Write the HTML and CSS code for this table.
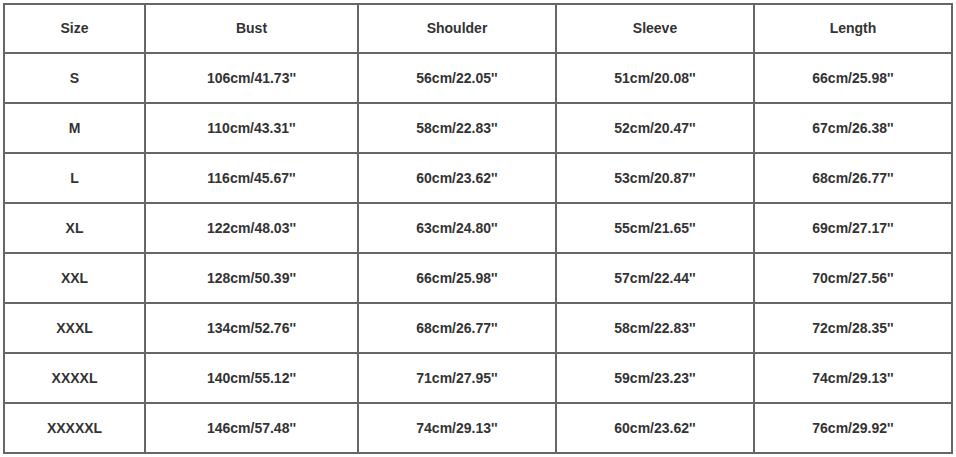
FILE: index.html
```html
<!DOCTYPE html>
<html>
<head>
<meta charset="utf-8">
<link rel="stylesheet" href="styles.css">
</head>
<body>
<table class="size-table">
  <colgroup>
    <col class="c-size"><col class="c-bust"><col class="c-sh"><col class="c-sl"><col class="c-len">
  </colgroup>
  <thead>
    <tr><th>Size</th><th>Bust</th><th>Shoulder</th><th>Sleeve</th><th>Length</th></tr>
  </thead>
  <tbody>
    <tr><td>S</td><td>106cm/41.73''</td><td>56cm/22.05''</td><td>51cm/20.08''</td><td>66cm/25.98''</td></tr>
    <tr><td>M</td><td>110cm/43.31''</td><td>58cm/22.83''</td><td>52cm/20.47''</td><td>67cm/26.38''</td></tr>
    <tr><td>L</td><td>116cm/45.67''</td><td>60cm/23.62''</td><td>53cm/20.87''</td><td>68cm/26.77''</td></tr>
    <tr><td>XL</td><td>122cm/48.03''</td><td>63cm/24.80''</td><td>55cm/21.65''</td><td>69cm/27.17''</td></tr>
    <tr><td>XXL</td><td>128cm/50.39''</td><td>66cm/25.98''</td><td>57cm/22.44''</td><td>70cm/27.56''</td></tr>
    <tr><td>XXXL</td><td>134cm/52.76''</td><td>68cm/26.77''</td><td>58cm/22.83''</td><td>72cm/28.35''</td></tr>
    <tr><td>XXXXL</td><td>140cm/55.12''</td><td>71cm/27.95''</td><td>59cm/23.23''</td><td>74cm/29.13''</td></tr>
    <tr><td>XXXXXL</td><td>146cm/57.48''</td><td>74cm/29.13''</td><td>60cm/23.62''</td><td>76cm/29.92''</td></tr>
  </tbody>
</table>
</body>
</html>
```
FILE: styles.css
```css
html, body {
  margin: 0;
  padding: 0;
  background: #ffffff;
}
body {
  padding: 3px 0 0 3px;
  font-family: "Liberation Sans", Arial, sans-serif;
}
.size-table {
  border-collapse: collapse;
  table-layout: fixed;
  width: 950px;
}
.c-size { width: 141px; }
.c-bust { width: 213px; }
.c-sh { width: 198px; }
.c-sl { width: 198px; }
.c-len { width: 198px; }
.size-table th,
.size-table td {
  border: 2px solid #666666;
  height: 48px;
  padding: 0;
  text-align: center;
  vertical-align: middle;
  font-size: 14px;
  font-weight: bold;
  color: #333333;
}
.size-table th {
  height: 45px;
  padding-bottom: 2px;
}
```
